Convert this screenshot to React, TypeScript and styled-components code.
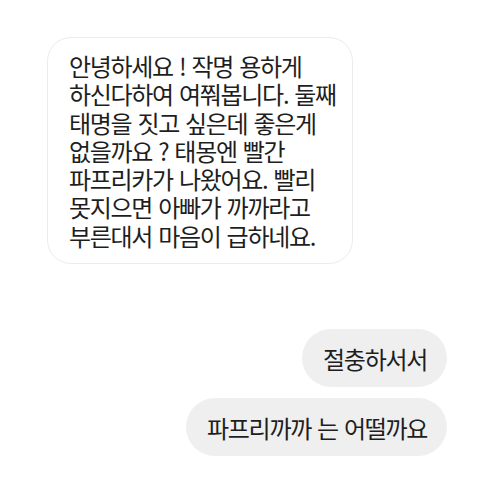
import React from "react";
import styled, { createGlobalStyle } from "styled-components";

const Global = createGlobalStyle`
  html, body { margin: 0; padding: 0; background: #ffffff; }
  body { font-family: "Noto Sans CJK KR", "Noto Sans", sans-serif; }
`;

const Page = styled.div`
  width: 500px;
  height: 500px;
  box-sizing: border-box;
  padding: 37px 53px 0 47px;
  display: flex;
  flex-direction: column;
  background: #ffffff;
`;

const Incoming = styled.div`
  align-self: flex-start;
  width: 306px;
  box-sizing: border-box;
  border: 1.5px solid #ececec;
  border-radius: 24px;
  padding: 14px 0 13px 21px;
  font-size: 24px;
  letter-spacing: -1.3px;
  word-spacing: 2px;
  line-height: 28.3px;
  color: #1e1e1e;
`;

const Line = styled.div`
  white-space: nowrap;
`;

const Outgoing = styled.div<{ $top: number }>`
  align-self: flex-end;
  margin-top: ${(p) => p.$top}px;
  height: 58px;
  box-sizing: border-box;
  padding: 0 20px 0 21px;
  display: flex;
  align-items: center;
  background: #efefef;
  border-radius: 29px;
  font-size: 24px;
  letter-spacing: -1.3px;
  word-spacing: 2px;
  color: #1e1e1e;
`;

const lines = [
  "안녕하세요 ! 작명 용하게",
  "하신다하여 여쭤봅니다. 둘째",
  "태명을 짓고 싶은데 좋은게",
  "없을까요 ? 태몽엔 빨간",
  "파프리카가 나왔어요. 빨리",
  "못지으면 아빠가 까까라고",
  "부른대서 마음이 급하네요.",
];

export default function App() {
  return (
    <>
      <Global />
      <Page>
        <Incoming>
          {lines.map((l) => (
            <Line key={l}>{l}</Line>
          ))}
        </Incoming>
        <Outgoing $top={65}>절충하서서</Outgoing>
        <Outgoing $top={11}>파프리까까 는 어떨까요</Outgoing>
      </Page>
    </>
  );
}
